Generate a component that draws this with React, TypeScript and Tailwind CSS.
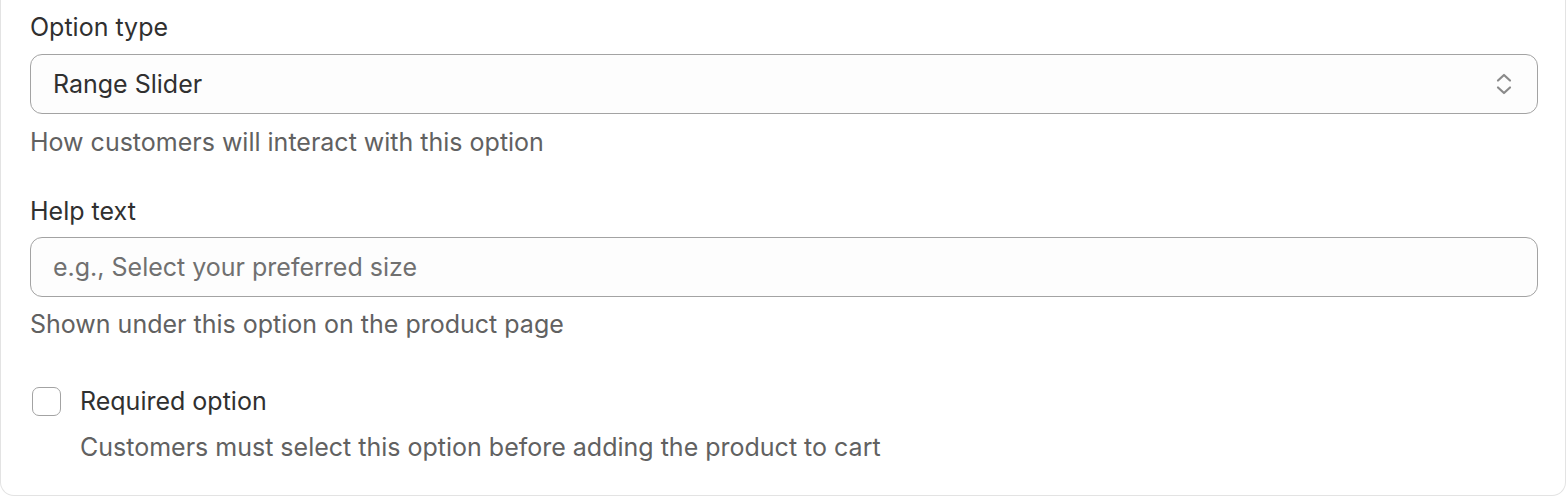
import { useState } from "react";

const SelectArrows = () => (
  <svg
    width="20"
    height="28"
    viewBox="0 0 20 28"
    fill="none"
    stroke="#8a8a8a"
    strokeWidth="2.2"
    strokeLinecap="round"
    strokeLinejoin="round"
  >
    <path d="M4 10.5 10 5l6 5.5" />
    <path d="M4 17.5 10 23l6-5.5" />
  </svg>
);

export default function App() {
  const [optionType, setOptionType] = useState("range");
  const [required, setRequired] = useState(false);

  return (
    <div className="w-[1566px] h-[497px] bg-white font-['Inter','Liberation_Sans',sans-serif] text-[25px] leading-[30px]">
      <div className="h-[496px] border-x border-b border-[#e3e3e3] rounded-b-[14px] pl-[29px] pr-[27px] pt-[12px]">
        {/* Option type */}
        <div className="flex flex-col">
          <label className="text-[#303030]">Option type</label>
          <div className="relative mt-[12px]">
            <select
              value={optionType}
              onChange={(e) => setOptionType(e.target.value)}
              className="w-full h-[60px] appearance-none rounded-[12px] border border-[#a3a3a3] bg-[#fdfdfd] pl-[22px] pr-12 text-[#303030] outline-none"
            >
              <option value="range">Range Slider</option>
              <option value="dropdown">Dropdown</option>
              <option value="buttons">Buttons</option>
            </select>
            <span className="pointer-events-none absolute right-[24px] top-1/2 -translate-y-1/2">
              <SelectArrows />
            </span>
          </div>
          <p className="mt-[13px] text-[#616161]">
            How customers will interact with this option
          </p>
        </div>

        {/* Help text */}
        <div className="flex flex-col mt-[39px]">
          <label className="text-[#303030]">Help text</label>
          <input
            type="text"
            placeholder="e.g., Select your preferred size"
            className="mt-[11px] w-full h-[60px] rounded-[12px] border border-[#a3a3a3] bg-[#fdfdfd] px-[22px] text-[#303030] placeholder:text-[#707070] outline-none"
          />
          <p className="mt-[12px] text-[#616161]">
            Shown under this option on the product page
          </p>
        </div>

        {/* Required checkbox */}
        <div className="mt-[47px] flex gap-[19px]">
          <button
            type="button"
            onClick={() => setRequired(!required)}
            className="mt-[1px] ml-[2px] w-[29px] h-[29px] shrink-0 rounded-[7px] border border-[#a3a3a3] bg-white"
          />
          <div className="flex flex-col">
            <span className="text-[#303030]">Required option</span>
            <span className="mt-[16px] text-[#616161]">
              Customers must select this option before adding the product to cart
            </span>
          </div>
        </div>
      </div>
    </div>
  );
}
